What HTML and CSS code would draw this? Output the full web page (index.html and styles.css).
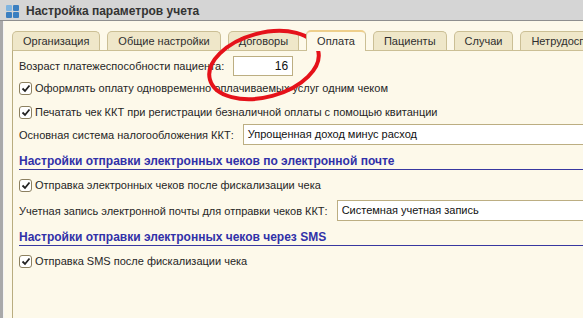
FILE: index.html
```html
<!DOCTYPE html>
<html lang="ru">
<head>
    <meta charset="UTF-8">
    <title>Настройка параметров учета</title>
    <link rel="stylesheet" href="styles.css">
</head>
<body>
    <div class="window">
        <div class="titlebar">
            <svg class="app-icon" width="13" height="13" viewBox="0 0 13 13">
                <rect x="0" y="0" width="6" height="6" rx="1" fill="#7fb4e0"/>
                <rect x="7" y="0" width="6" height="6" rx="1" fill="#3b7fc0"/>
                <rect x="0" y="7" width="6" height="6" rx="1" fill="#3b7fc0"/>
                <rect x="7" y="7" width="6" height="6" rx="1" fill="#3b7fc0"/>
            </svg>
            <span class="title">Настройка параметров учета</span>
        </div>

        <div class="frame">
            <div class="tabs">
                <div class="tab">Организация</div>
                <div class="tab">Общие настройки</div>
                <div class="tab">Договоры</div>
                <div class="tab active">Оплата</div>
                <div class="tab">Пациенты</div>
                <div class="tab">Случаи</div>
                <div class="tab">Нетрудоспособность</div>
            </div>

            <div class="panel">
                <div class="row row-age">
                    <span class="label">Возраст платежеспособности пациента:</span>
                    <div class="input input-num">16</div>
                </div>
                <div class="row check-row check-1">
                    <span class="checkbox"><svg width="10" height="9" viewBox="0 0 10 9"><path d="M1.5 4.5 L4 7 L8.5 1.5" fill="none" stroke="#222" stroke-width="1.8"/></svg></span>
                    <span>Оформлять оплату одновременно оплачиваемых услуг одним чеком</span>
                </div>
                <div class="row check-row check-2">
                    <span class="checkbox"><svg width="10" height="9" viewBox="0 0 10 9"><path d="M1.5 4.5 L4 7 L8.5 1.5" fill="none" stroke="#222" stroke-width="1.8"/></svg></span>
                    <span>Печатать чек ККТ при регистрации безналичной оплаты с помощью квитанции</span>
                </div>
                <div class="row row-tax">
                    <span class="label">Основная система налогообложения ККТ:</span>
                    <div class="input input-wide">Упрощенная доход минус расход</div>
                </div>

                <div class="section-title">Настройки отправки электронных чеков по электронной почте</div>
                <div class="row check-row check-3">
                    <span class="checkbox"><svg width="10" height="9" viewBox="0 0 10 9"><path d="M1.5 4.5 L4 7 L8.5 1.5" fill="none" stroke="#222" stroke-width="1.8"/></svg></span>
                    <span>Отправка электронных чеков после фискализации чека</span>
                </div>
                <div class="row row-mail">
                    <span class="label">Учетная запись электронной почты для отправки чеков ККТ:</span>
                    <div class="input input-wide">Системная учетная запись</div>
                </div>

                <div class="section-title">Настройки отправки электронных чеков через SMS</div>
                <div class="row check-row check-3">
                    <span class="checkbox"><svg width="10" height="9" viewBox="0 0 10 9"><path d="M1.5 4.5 L4 7 L8.5 1.5" fill="none" stroke="#222" stroke-width="1.8"/></svg></span>
                    <span>Отправка SMS после фискализации чека</span>
                </div>
            </div>
        </div>

        <!-- пометка красным поверх формы -->
        <svg class="mark" width="583" height="318" viewBox="0 0 583 318">
            <ellipse cx="264" cy="65" rx="56" ry="32" transform="rotate(-15 264 65)" fill="none" stroke="#e5121a" stroke-width="4"/>
        </svg>
    </div>
</body>
</html>
```

FILE: styles.css
```css
* {
    margin: 0;
    padding: 0;
    box-sizing: border-box;
}

body {
    font-family: 'Liberation Sans', Arial, sans-serif;
    font-size: 11px;
    color: #262626;
    background: #fdf9ea;
    width: 583px;
    height: 318px;
    overflow: hidden;
}

.window {
    position: relative;
    width: 583px;
    height: 318px;
    overflow: hidden;
}

.titlebar {
    height: 21px;
    background: #d5d5d5;
    display: flex;
    align-items: center;
    padding-left: 6px;
    border-bottom: 1px solid #8e8e8e;
}

.app-icon {
    margin-top: 2px;
    margin-right: 7px;
}

.title {
    font-weight: bold;
    font-size: 12px;
    color: #333;
    margin-top: 1px;
}

.frame {
    height: 297px;
    border-left: 3px solid #a9a9a9;
    padding-left: 9px;
    padding-top: 9px;
    background: #fdf9ea;
    box-shadow: inset 1px 0 #f4f4f4;
}

.tabs {
    display: flex;
    align-items: flex-end;
    gap: 7px;
    height: 20px;
    white-space: nowrap;
}

.tab {
    height: 19px;
    line-height: 18px;
    padding: 0 10px;
    background: #efe7c9;
    border: 1px solid #cbbf95;
    border-bottom: none;
    border-radius: 5px 5px 0 0;
    color: #2e2e2e;
}

.tab.active {
    position: relative;
    height: 21px;
    margin-bottom: -1px;
    background: #fdf9ea;
    border-top: 2px solid #eecf8c;
    line-height: 19px;
    z-index: 1;
}

.panel {
    height: 268px;
    border-left: 1px solid #b9ad80;
    border-top: 1px solid #cbbf95;
    padding-left: 6px;
    white-space: nowrap;
}

.row {
    display: flex;
    align-items: center;
}

.label {
    margin-right: 9px;
}

.input {
    height: 21px;
    line-height: 19px;
    background: #fff;
    border: 1px solid #bcae82;
    padding: 0 4px;
    color: #111;
}

.input-num {
    width: 60px;
    height: 20px;
    text-align: right;
    font-size: 12px;
}

.input-wide {
    flex: 1;
    margin-right: -10px;
}

.row-age {
    margin-top: 5px;
}

.check-row {
    height: 16px;
}

.check-1 {
    margin-top: 4px;
}

.check-2 {
    margin-top: 8px;
}

.check-3 {
    margin-top: 7px;
}

.row-tax {
    margin-top: 4px;
}

.row-mail {
    margin-top: 7px;
}

.checkbox {
    width: 13px;
    height: 13px;
    border: 1px solid #8c8060;
    border-radius: 3px;
    background: #fff;
    margin-right: 3px;
    display: flex;
    align-items: center;
    justify-content: center;
}

.section-title {
    margin-top: 5px;
    padding-top: 4px;
    line-height: 15px;
    font-weight: bold;
    font-size: 12px;
    color: #3131a8;
    border-bottom: 1px solid #3838a0;
}

.mark {
    position: absolute;
    left: 0;
    top: 0;
    pointer-events: none;
}
```
